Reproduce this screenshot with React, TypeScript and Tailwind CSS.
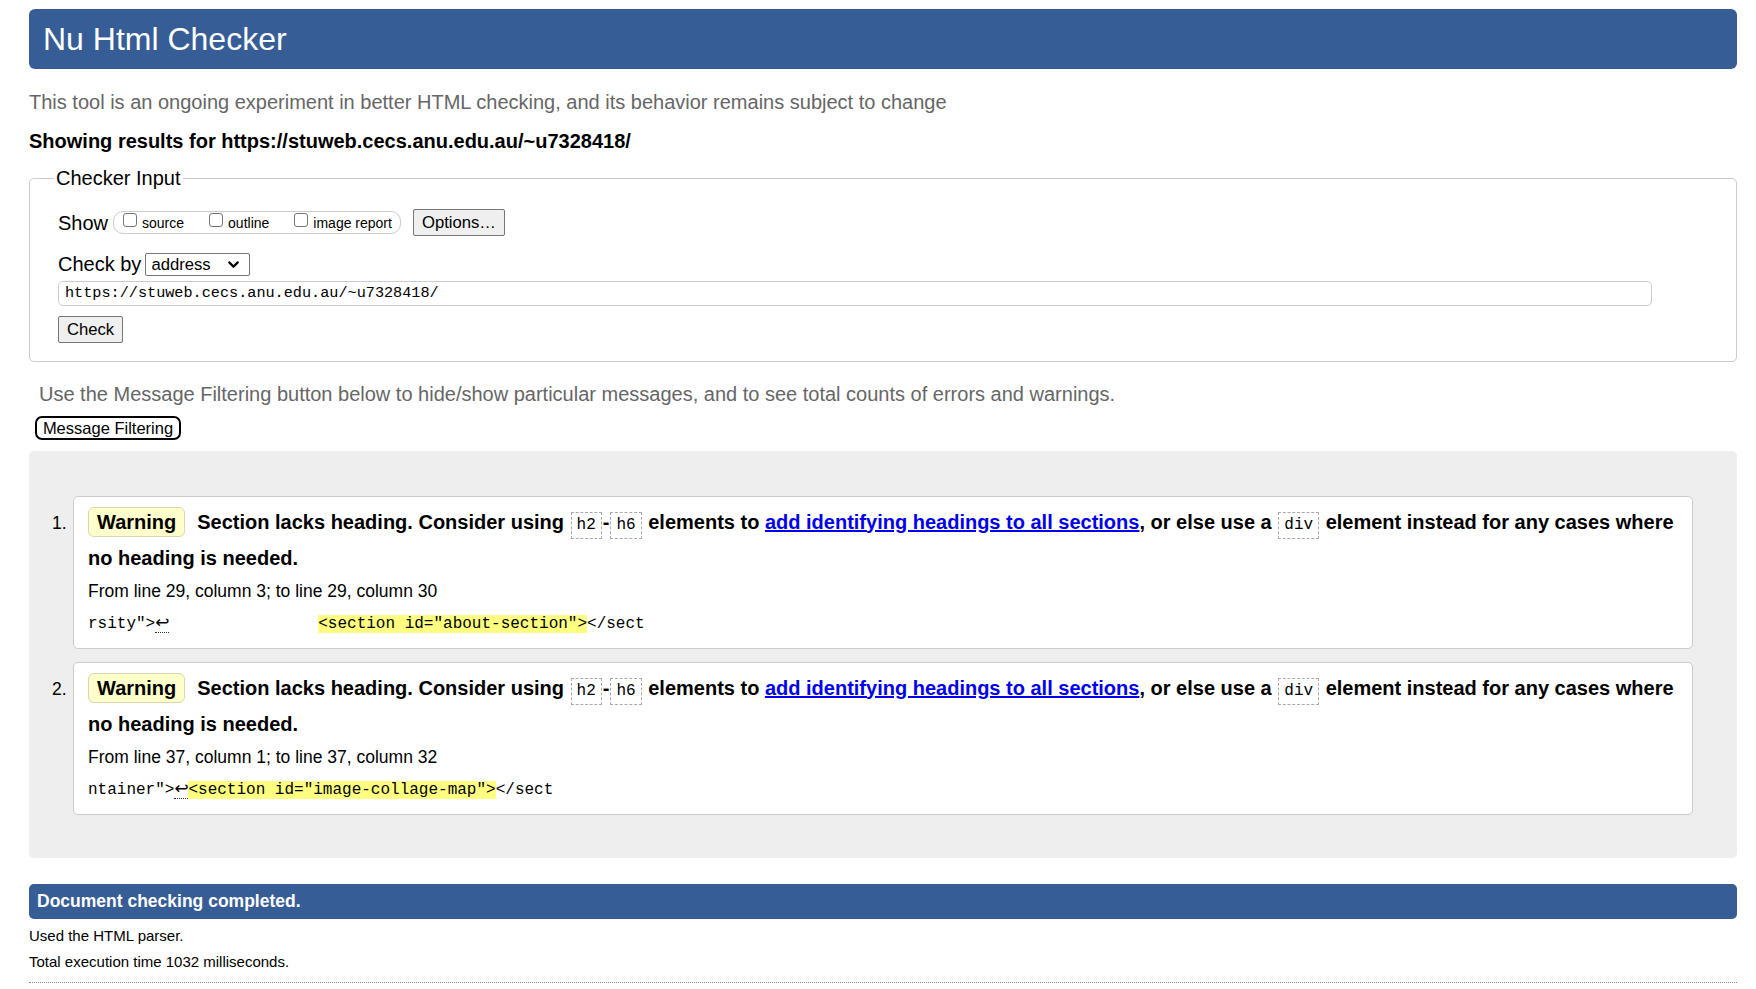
import React from "react";
import { ChevronDown } from "lucide-react";

const Code = ({ children }: { children: React.ReactNode }) => (
  <code className="inline-block mx-[1px] px-[5px] border border-dashed border-[#aaa] font-['Liberation_Mono',monospace] font-normal text-[16px] leading-[25px]">
    {children}
  </code>
);

const Check = ({ label }: { label: string }) => (
  <label className="flex items-start gap-[5px]">
    <span className="mt-[1px] w-[14px] h-[14px] rounded-[3px] border border-[#767676] bg-white" />
    <span className="text-[14px] leading-[20px] mt-[1px]">{label}</span>
  </label>
);

const Message = ({
  num,
  from,
  extract,
}: {
  num: string;
  from: string;
  extract: React.ReactNode;
}) => (
  <li className="flex">
    <span className="w-[44px] shrink-0 pl-[23px] pt-[15px] text-[17.5px] leading-[24px]">
      {num}
    </span>
    <div className="flex-1 bg-white border border-[#ccc] rounded-[5px] pl-[14px] pr-[4px] pt-[7px] pb-[11px]">
      <p className="font-bold text-[20px] leading-[36px]">
        <span className="inline-block mr-[12px] px-[8px] rounded-[6px] border border-[#d9d6b0] bg-[#ffffcc] leading-[28px]">
          Warning
        </span>
        Section lacks heading. Consider using <Code>h2</Code>-<Code>h6</Code>{" "}
        elements to{" "}
        <a href="#" className="text-[#0000ee] underline">
          add identifying headings to all sections
        </a>
        , or else use a <Code>div</Code> element instead for any cases where
        no heading is needed.
      </p>
      <p className="mt-[2px] text-[17.5px] leading-[26px]">{from}</p>
      <p className="mt-[7px] font-['Liberation_Mono',monospace] text-[16px] leading-[26px] whitespace-pre">
        {extract}
      </p>
    </div>
  </li>
);

const Ret = () => (
  <span className="inline-block w-[14px] text-center border-b border-dotted border-[#333] leading-[20px] font-['DejaVu_Sans',sans-serif] text-[17px]">
    ↩
  </span>
);

export default function App() {
  return (
    <div className="min-h-screen bg-white text-black font-['Liberation_Sans',Arial,sans-serif] pl-[29px] pr-[19px] pt-[9px] pb-[8px]">
      <h1 className="h-[60px] flex items-center pl-[14px] rounded-[6px] bg-[#365d95] text-white text-[32px]">
        Nu Html Checker
      </h1>
      <p className="mt-[21px] text-[20px] leading-[24px] text-[#666]">
        This tool is an ongoing experiment in better HTML checking, and its
        behavior remains subject to change
      </p>
      <p className="mt-[15px] text-[20px] leading-[24px] font-bold">
        Showing results for https://stuweb.cecs.anu.edu.au/~u7328418/
      </p>

      <fieldset className="mt-[13px] border border-[#ccc] rounded-[5px] pl-[28px] pb-[18px]">
        <legend className="-ml-[4px] px-[2px] text-[20px] leading-[24px]">
          Checker Input
        </legend>
        <div className="mt-[19px] flex items-center h-[27px]">
          <span className="text-[20px] leading-[24px] mr-[5px]">Show</span>
          <div className="flex items-start gap-[25px] h-[23px] pl-[9px] pr-[8px] rounded-[10px] border border-[#ccc]">
            <Check label="source" />
            <Check label="outline" />
            <Check label="image report" />
          </div>
          <button className="ml-[12px] h-[27px] px-[8px] rounded-[2px] border border-[#767676] bg-[#efefef] text-[16.67px]">
            Options…
          </button>
        </div>
        <div className="mt-[16px] flex items-center h-[24px]">
          <span className="text-[20px] leading-[24px] mr-[4px]">Check by</span>
          <div className="flex items-center justify-between w-[105px] h-[23px] pl-[5px] pr-[7px] border border-[#767676] rounded-[2px] text-[16.67px]">
            address
            <ChevronDown size={17} strokeWidth={3} />
          </div>
        </div>
        <div className="mt-[5px] w-[1594px] h-[25px] flex items-center px-[6px] border border-[#ccc] rounded-[5px] font-['Liberation_Mono',monospace] text-[15.2px]">
          https://stuweb.cecs.anu.edu.au/~u7328418/
        </div>
        <button className="mt-[10px] h-[27px] w-[65px] rounded-[2px] border border-[#767676] bg-[#efefef] text-[16.67px]">
          Check
        </button>
      </fieldset>

      <p className="mt-[20px] ml-[10px] text-[20px] leading-[24px] text-[#666]">
        Use the Message Filtering button below to hide/show particular
        messages, and to see total counts of errors and warnings.
      </p>
      <button className="mt-[10px] ml-[6px] h-[24px] w-[146px] rounded-[7px] border-2 border-black bg-white text-[16.5px] leading-[19px]">
        Message Filtering
      </button>

      <ol className="mt-[10px] bg-[#eee] rounded-[5px] pt-[45px] pb-[43px] pr-[44px] flex flex-col gap-[13px]">
        <Message
          num="1."
          from="From line 29, column 3; to line 29, column 30"
          extract={
            <>
              rsity"&gt;
              <Ret />
              <span className="inline-block w-[149px]" />
              <mark className="bg-[#ffff80] text-black">
                &lt;section id="about-section"&gt;
              </mark>
              &lt;/sect
            </>
          }
        />
        <Message
          num="2."
          from="From line 37, column 1; to line 37, column 32"
          extract={
            <>
              ntainer"&gt;
              <Ret />
              <mark className="bg-[#ffff80] text-black">
                &lt;section id="image-collage-map"&gt;
              </mark>
              &lt;/sect
            </>
          }
        />
      </ol>

      <div className="mt-[26px] h-[35px] flex items-center pl-[8px] rounded-[5px] bg-[#365d95] text-white font-bold text-[17.5px]">
        Document checking completed.
      </div>
      <p className="mt-[7px] text-[15px] leading-[20px]">Used the HTML parser.</p>
      <p className="mt-[6px] text-[15px] leading-[20px]">
        Total execution time 1032 milliseconds.
      </p>
      <div className="mt-[10px] border-t border-dotted border-[#888]" />
    </div>
  );
}
